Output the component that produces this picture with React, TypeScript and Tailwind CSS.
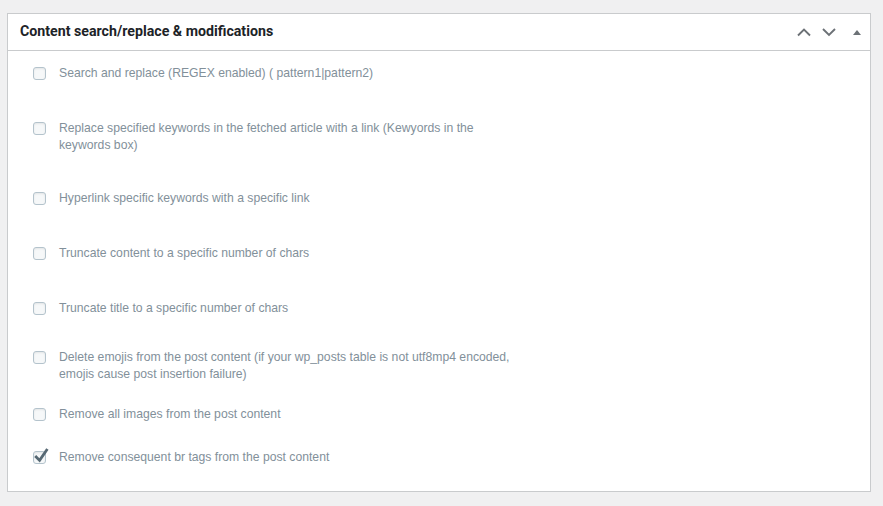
import React from "react";

const rows: { text: string; h: number; checked?: boolean }[] = [
  { text: "Search and replace (REGEX enabled) ( pattern1|pattern2)", h: 55 },
  { text: "Replace specified keywords in the fetched article with a link (Kewyords in the keywords box)", h: 70 },
  { text: "Hyperlink specific keywords with a specific link", h: 55 },
  { text: "Truncate content to a specific number of chars", h: 55 },
  { text: "Truncate title to a specific number of chars", h: 49 },
  { text: "Delete emojis from the post content (if your wp_posts table is not utf8mp4 encoded, emojis cause post insertion failure)", h: 57 },
  { text: "Remove all images from the post content", h: 43 },
  { text: "Remove consequent br tags from the post content", h: 42, checked: true },
];

function Box({ checked }: { checked?: boolean }) {
  return (
    <div className="relative mt-[2px] h-[13px] w-[13px] shrink-0 rounded-[3px] border border-[#b4c3cc] bg-[#f6f8f9] shadow-[inset_0_1px_2px_rgba(0,0,0,0.08)]">
      {checked && (
        <svg className="absolute left-[0px] top-[-5px]" width="15" height="17" viewBox="0 0 15 17">
          <path d="M2.2 10 L5.6 13.4 L12.6 3.2" fill="none" stroke="#566873" strokeWidth="2.8" strokeLinecap="square" />
        </svg>
      )}
    </div>
  );
}

export default function App() {
  return (
    <div className="min-h-[506px] w-[883px] bg-[#f0f0f1] pt-[13px] pl-[7px]" style={{ fontFamily: "'Liberation Sans', Arial, sans-serif" }}>
      <div className="w-[864px] border border-[#c9cbcd] bg-white">
        <div className="flex h-[37px] items-center justify-between border-b border-[#c9cbcd] pl-[12px] pr-[8px]">
          <span className="text-[14.2px] font-bold text-[#1d2327]" style={{ fontFamily: "Roboto, 'Liberation Sans', sans-serif" }}>
            Content search/replace &amp; modifications
          </span>
          <div className="flex items-center">
            <svg width="16" height="16" viewBox="0 0 16 16" className="mr-[9px]">
              <path d="M2 11.5 L8 5.5 L14 11.5" fill="none" stroke="#6c7176" strokeWidth="1.9" />
            </svg>
            <svg width="16" height="16" viewBox="0 0 16 16" className="mr-[14px]">
              <path d="M2 5 L8 11 L14 5" fill="none" stroke="#6c7176" strokeWidth="1.9" />
            </svg>
            <svg width="10" height="10" viewBox="0 0 10 10" className="ml-[1px]">
              <path d="M1 8 L5 3 L9 8 Z" fill="#6c7176" />
            </svg>
          </div>
        </div>
        <div className="pt-[14px] pl-[25px]">
          {rows.map((r, i) => (
            <div key={i} className="flex items-start" style={{ height: r.h }}>
              <Box checked={r.checked} />
              <span className="ml-[13px] w-[462px] text-[12.2px] leading-[17px] text-[#82909a]">{r.text}</span>
            </div>
          ))}
        </div>
      </div>
    </div>
  );
}
